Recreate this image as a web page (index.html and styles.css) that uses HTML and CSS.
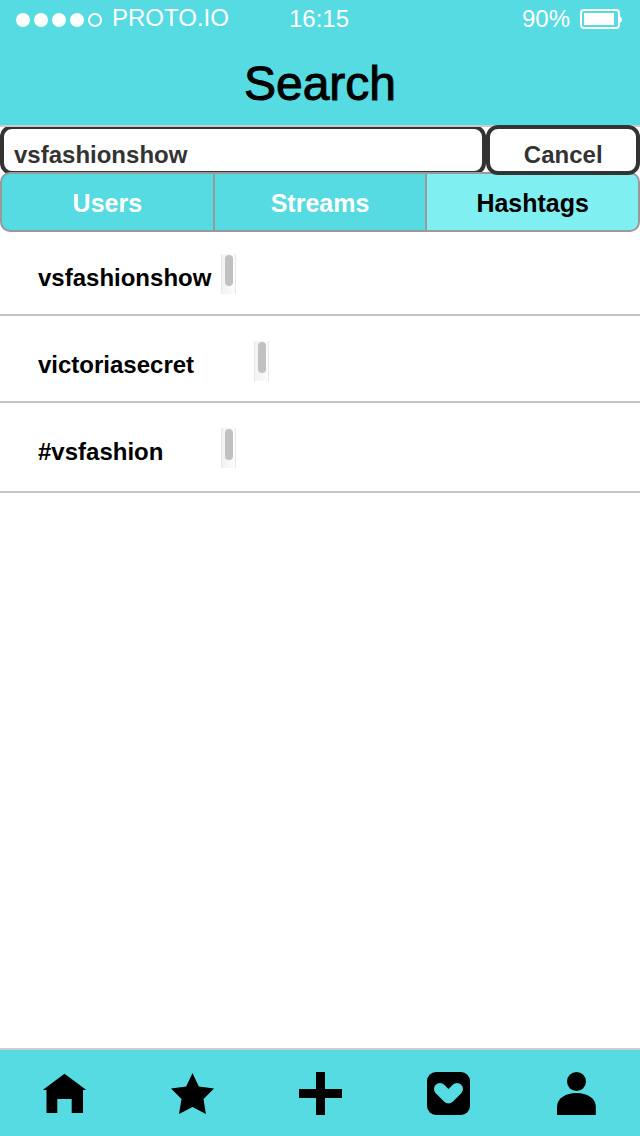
FILE: index.html
```html
<!DOCTYPE html>
<html lang="en">
<head>
<meta charset="utf-8">
<meta name="viewport" content="width=device-width, initial-scale=1">
<title>Search</title>
<link rel="stylesheet" href="styles.css">
</head>
<body>
<div class="app">
  <header class="header">
    <div class="status">
      <div class="status-left">
        <svg class="signal" width="88" height="16" viewBox="0 0 88 16" aria-hidden="true">
          <circle cx="7" cy="8" r="7"/><circle cx="25" cy="8" r="7"/><circle cx="43" cy="8" r="7"/><circle cx="61" cy="8" r="7"/>
          <circle class="signal-empty" cx="79" cy="8" r="6.1"/>
        </svg>
        <span class="carrier">PROTO.IO</span>
      </div>
      <span class="clock">16:15</span>
      <div class="status-right">
        <span>90%</span>
        <svg class="battery" width="42" height="20" viewBox="0 0 42 20" aria-hidden="true">
          <rect class="battery-case" x="1" y="1" width="38" height="18" rx="3"/>
          <rect x="4" y="4" width="30" height="12"/>
          <path d="M40 7 Q42 9 42 11 Q42 13 40 14Z"/>
        </svg>
      </div>
    </div>
    <h1 class="title">Search</h1>
  </header>

  <form class="search">
    <input class="search-input" type="text" value="vsfashionshow" aria-label="Search">
    <button class="cancel" type="button">Cancel</button>
  </form>

  <nav class="tabs" aria-label="Result type">
    <button class="tab" type="button">Users</button>
    <button class="tab" type="button">Streams</button>
    <button class="tab tab-active" type="button" aria-current="true">Hashtags</button>
  </nav>

  <main class="results">
    <div class="result result-first">
      <a class="result-link" href="#">vsfashionshow</a>
      <span class="scroll"><span class="thumb"></span></span>
    </div>
    <div class="result">
      <a class="result-link result-wide" href="#">victoriasecret</a>
      <span class="scroll"><span class="thumb"></span></span>
    </div>
    <div class="result result-last">
      <a class="result-link" href="#">#vsfashion</a>
      <span class="scroll"><span class="thumb"></span></span>
    </div>
  </main>

  <nav class="tabbar" aria-label="Main">
    <a class="tabbar-item" href="#" aria-label="Home">
      <svg width="44" height="44" viewBox="0 0 44 44"><path d="M22.500 2.800 L43.700 18.500 V19 H41 V42 H29.700 V28 H15.300 V42 H4.500 V19 H1.300 V18.500Z"/></svg>
    </a>
    <a class="tabbar-item" href="#" aria-label="Favorites">
      <svg width="44" height="44" viewBox="0 0 44 44"><path d="M22.500 2 L28.800 15.500 L44 17.500 L33.500 28 L35.900 43 L22.500 36 L9 43 L11.500 28 L1 17.500 L16.200 15.500Z"/></svg>
    </a>
    <a class="tabbar-item" href="#" aria-label="Add">
      <svg width="44" height="44" viewBox="0 0 44 44"><path d="M18 1 H27 V18 H44 V27 H27 V44 H18 V27 H1 V18 H18Z"/></svg>
    </a>
    <a class="tabbar-item" href="#" aria-label="Likes">
      <svg width="44" height="44" viewBox="0 0 44 44"><rect x="1" y="1" width="43" height="43" rx="9"/><path class="heart" d="M14 18 L22.500 26.500 L31 18"/></svg>
    </a>
    <a class="tabbar-item" href="#" aria-label="Profile">
      <svg width="44" height="44" viewBox="0 0 44 44"><circle cx="22.500" cy="10.500" r="9.500"/><path d="M3 44 V36 C3 27 12 22 22.500 22 C33 22 41.800 27 41.800 36 V44Z"/></svg>
    </a>
  </nav>
</div>
</body>
</html>
```
FILE: styles.css
```css
* {
  box-sizing: border-box;
}

body {
  margin: 0;
  background: #fff;
  color: #000;
  font-family: "Liberation Sans", Arial, sans-serif;
  font-size: 24px;
  line-height: 28px;
}

button,
input {
  margin: 0;
  font-family: inherit;
  font-weight: bold;
}

a {
  color: inherit;
  text-decoration: none;
}

svg {
  display: block;
}

.app {
  display: flex;
  flex-direction: column;
  min-height: 100vh;
}

.header {
  position: relative;
  z-index: 1;
  padding-bottom: 13px;
  border-bottom: 2px solid #ccc;
  background: #55dbe1;
}

.status {
  display: grid;
  grid-template-columns: 1fr auto 1fr;
  padding: 5px 18px 0 16px;
  color: #fff;
}

.status-left,
.status-right {
  display: flex;
  align-items: center;
  gap: 8px;
}

.status-left {
  align-items: flex-start;
}

.signal {
  margin-top: 7px;
}

.carrier {
  margin-top: -1px;
}

.status-right {
  justify-content: flex-end;
  gap: 10px;
}

.signal,
.battery {
  fill: #fff;
}

.signal-empty,
.battery-case {
  fill: none;
  stroke: #fff;
  stroke-width: 2px;
}

.title {
  margin: 23px 0 0;
  font-size: 48px;
  font-weight: normal;
  line-height: 56px;
  text-align: center;
  -webkit-text-stroke: 1px #000;
}

.search {
  display: flex;
  margin-top: -2px;
}

.search-input,
.cancel {
  height: 50px;
  border: 4px solid #333;
  border-radius: 12px;
  background: #fff;
  color: #333;
  font-size: 24px;
}

.search-input {
  flex: 1;
  min-width: 0;
  padding: 10px 10px 0;
}

.cancel {
  position: relative;
  z-index: 2;
  width: 24%;
  padding: 10px 0 0;
}

.tabs {
  position: relative;
  z-index: 1;
  display: grid;
  grid-template-columns: repeat(3, 1fr);
  height: 60px;
  margin-top: -3px;
  border: 2px solid #999;
  border-radius: 10px;
  background: #999;
  gap: 2px;
  overflow: hidden;
}

.tab {
  padding: 2px 0 0;
  border: 0;
  background: #55dbe1;
  color: #fff;
  font-size: 25px;
}

.tab-active {
  background: #80eff1;
  color: #000;
}

.results {
  flex: 1;
}

.result {
  display: flex;
  padding: 25px 38px 20px;
  border-bottom: 2px solid #c4c4c4;
  font-weight: bold;
}

.result-first {
  padding-top: 22px;
}

.result-last {
  padding-bottom: 23px;
}

.result-link {
  width: 183px;
  padding-top: 10px;
}

.result-wide {
  width: 216px;
}

.scroll {
  width: 15px;
  height: 40px;
  padding: 1px 3px;
  border: solid #e8e8e8;
  border-width: 0 1px;
  background: linear-gradient(to right, #f2f2f2, #fcfcfc);
}

.thumb {
  display: block;
  width: 8px;
  height: 31px;
  border-radius: 4px;
  background: #c1c1c1;
}

.tabbar {
  display: grid;
  grid-template-columns: repeat(5, 1fr);
  height: 88px;
  border-top: 2px solid #ccc;
  background: #55dbe1;
}

.tabbar-item {
  display: flex;
  align-items: center;
  justify-content: center;
}

.heart {
  fill: none;
  stroke: #55dbe1;
  stroke-width: 12px;
  stroke-linecap: round;
  stroke-linejoin: round;
}
```
